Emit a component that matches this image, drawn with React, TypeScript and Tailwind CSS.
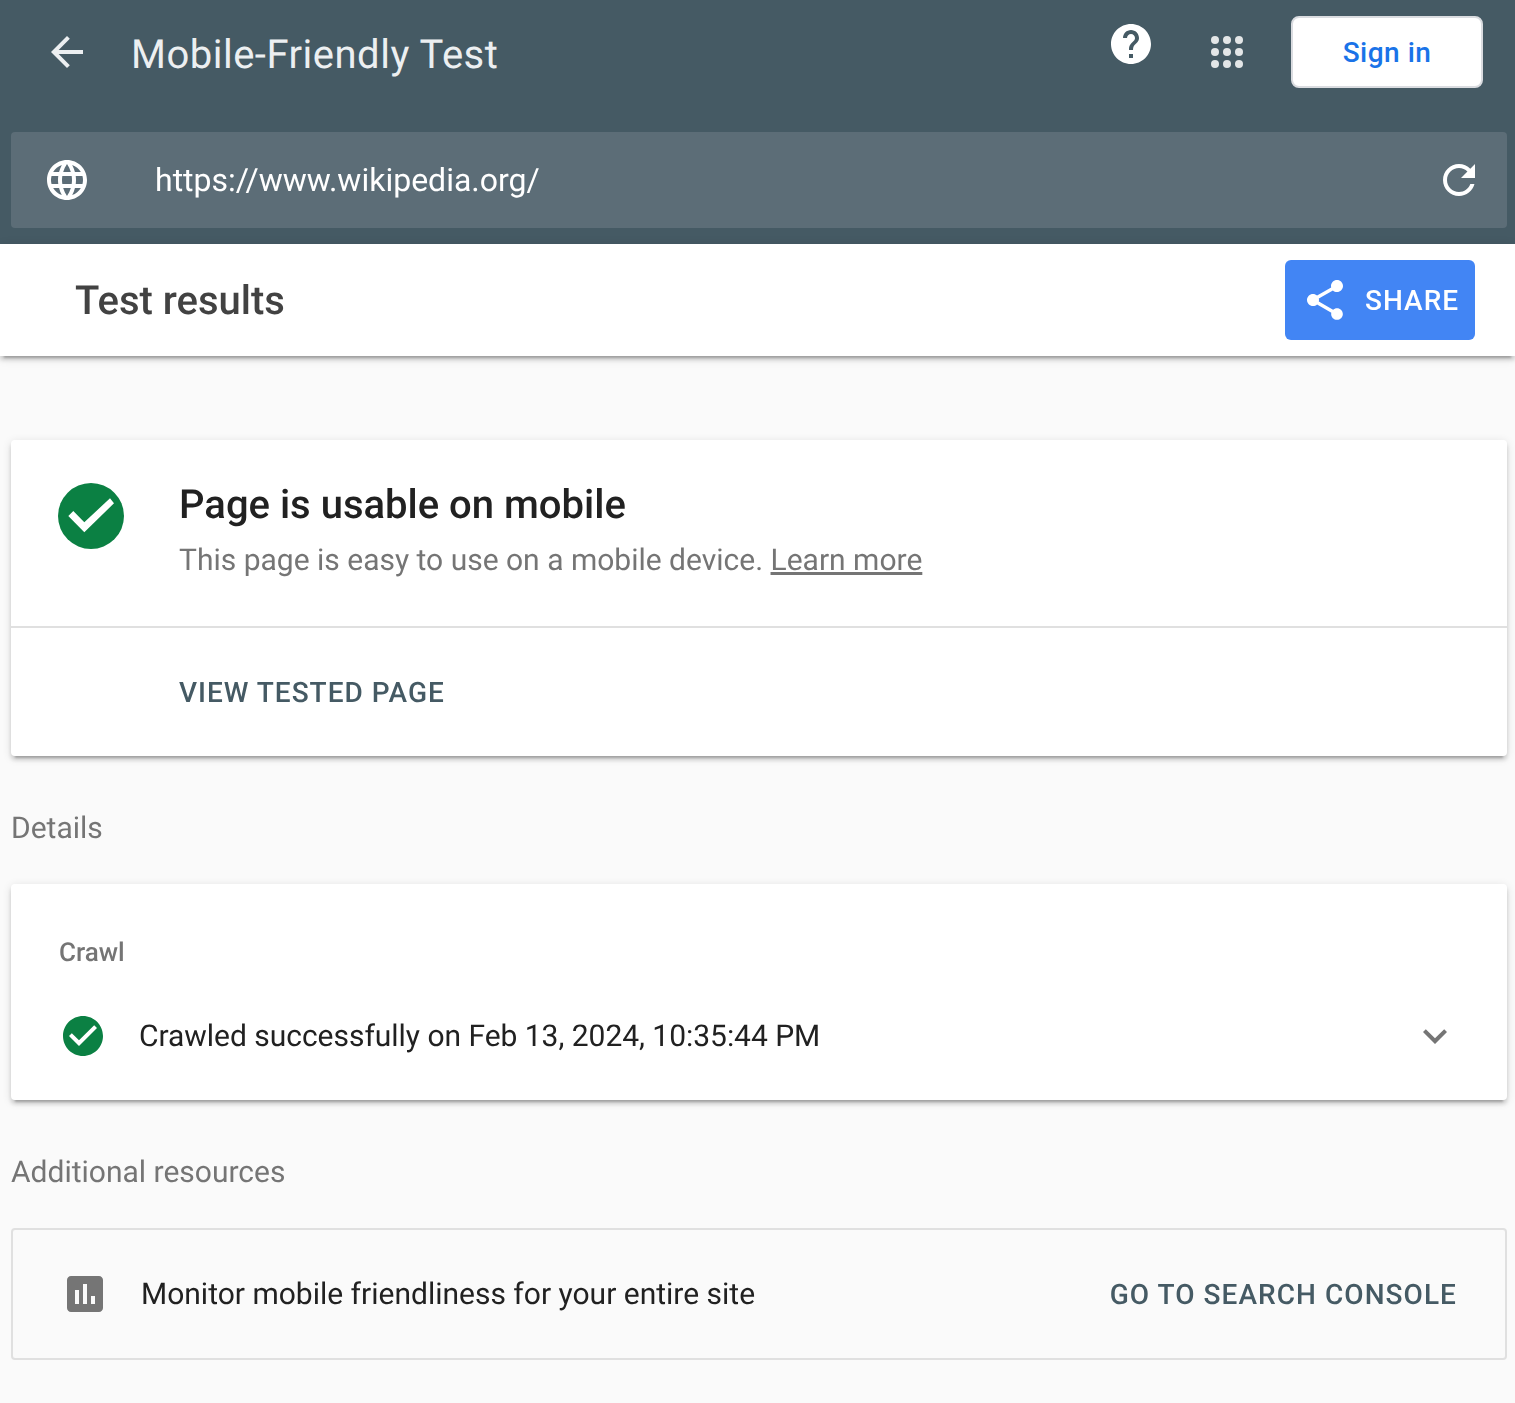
import type { ReactNode } from "react";

const roboto = "font-['Roboto',sans-serif] [text-rendering:geometricPrecision]";
const cardShadow = "shadow-[0_4px_4px_rgba(0,0,0,0.14),0_6px_2px_-4px_rgba(0,0,0,0.2),0_2px_10px_rgba(0,0,0,0.12)]";

function Icon({ d, className }: { d: string; className?: string }) {
  return (
    <svg viewBox="0 0 24 24" fill="currentColor" aria-hidden className={`h-12 w-12 shrink-0 ${className ?? ""}`}>
      <path d={d} />
    </svg>
  );
}

const paths = {
  back: "M20 11H7.83l5.59-5.59L12 4l-8 8 8 8 1.41-1.41L7.83 13H20v-2z",
  help: "M12 2C6.48 2 2 6.48 2 12s4.48 10 10 10 10-4.48 10-10S17.52 2 12 2zm1 17h-2v-2h2v2zm2.07-7.75l-.9.92C13.45 12.9 13 13.5 13 15h-2v-.5c0-1.1.45-2.1 1.17-2.83l1.24-1.26c.37-.36.59-.86.59-1.41 0-1.1-.9-2-2-2s-2 .9-2 2H8c0-2.21 1.79-4 4-4s4 1.79 4 4c0 .88-.36 1.68-.93 2.25z",
  globe: "M11.99 2C6.47 2 2 6.48 2 12s4.47 10 9.99 10C17.52 22 22 17.52 22 12S17.52 2 11.99 2zm6.93 6h-2.95c-.32-1.25-.78-2.45-1.38-3.56 1.84.63 3.37 1.91 4.33 3.56zM12 4.04c.83 1.2 1.48 2.53 1.91 3.96h-3.82c.43-1.43 1.08-2.76 1.91-3.96zM4.26 14C4.1 13.36 4 12.69 4 12s.1-1.36.26-2h3.38c-.08.66-.14 1.32-.14 2 0 .68.06 1.34.14 2H4.26zm.82 2h2.95c.32 1.25.78 2.45 1.38 3.56-1.84-.63-3.37-1.9-4.33-3.56zm2.95-8H5.08c.96-1.66 2.49-2.93 4.33-3.56C8.81 5.55 8.35 6.75 8.03 8zM12 19.96c-.83-1.2-1.48-2.53-1.91-3.96h3.82c-.43 1.43-1.08 2.76-1.91 3.96zM14.34 14H9.66c-.09-.66-.16-1.32-.16-2 0-.68.07-1.35.16-2h4.68c.09.65.16 1.32.16 2 0 .68-.07 1.34-.16 2zm.25 5.56c.6-1.11 1.06-2.31 1.38-3.56h2.95c-.96 1.65-2.49 2.93-4.33 3.56zM16.36 14c.08-.66.14-1.32.14-2 0-.68-.06-1.34-.14-2h3.38c.16.64.26 1.31.26 2s-.1 1.36-.26 2h-3.38z",
  refresh: "M17.65 6.35C16.2 4.9 14.21 4 12 4c-4.42 0-7.99 3.58-7.99 8s3.57 8 7.99 8c3.73 0 6.84-2.55 7.73-6h-2.08c-.82 2.33-3.04 4-5.65 4-3.31 0-6-2.69-6-6s2.69-6 6-6c1.66 0 3.14.69 4.22 1.78L13 11h7V4l-2.35 2.35z",
  share: "M18 16.08c-.76 0-1.44.3-1.96.77L8.91 12.7c.05-.23.09-.46.09-.7s-.04-.47-.09-.7l7.05-4.11c.54.5 1.25.81 2.04.81 1.66 0 3-1.34 3-3s-1.34-3-3-3-3 1.34-3 3c0 .24.04.47.09.7L8.04 9.81C7.5 9.31 6.79 9 6 9c-1.66 0-3 1.34-3 3s1.34 3 3 3c.79 0 1.5-.31 2.04-.81l7.12 4.16c-.05.21-.08.43-.08.65 0 1.61 1.31 2.92 2.92 2.92 1.61 0 2.92-1.31 2.92-2.92s-1.31-2.92-2.92-2.92z",
  checkCircle: "M12 2C6.48 2 2 6.48 2 12s4.48 10 10 10 10-4.48 10-10S17.52 2 12 2zm-2 15l-5-5 1.41-1.41L10 14.17l7.59-7.59L19 8l-9 9z",
  expand: "M16.59 8.59L12 13.17 7.41 8.59 6 10l6 6 6-6z",
  chart: "M19 3H5c-1.1 0-2 .9-2 2v14c0 1.1.9 2 2 2h14c1.1 0 2-.9 2-2V5c0-1.1-.9-2-2-2zM9 17H7v-7h2v7zm4 0h-2V7h2v10zm4 0h-2v-4h2v4z"
};

function AppsGrid() {
  return (
    <svg viewBox="0 0 48 48" fill="#e3e6e7" aria-hidden className="h-12 w-12 shrink-0">
      {[12, 24, 36].map((cy) =>
        [12, 24, 36].map((cx) => <circle key={`${cx}-${cy}`} cx={cx} cy={cy} r="4" />)
      )}
    </svg>
  );
}

function BigCheck() {
  return (
    <svg viewBox="0 0 66 66" aria-hidden className="h-[66px] w-[66px] shrink-0">
      <circle cx="33" cy="33" r="33" fill="#0b8043" />
      <polygon points="10.3,33 15.3,28 26.3,39.3 52,15.3 56,20.3 26.3,49.3" fill="#fff" />
    </svg>
  );
}

function SectionLabel({ children, className }: { children: ReactNode; className: string }) {
  return <h2 className={`pl-[11px] text-[30px] leading-9 text-[#757575] ${className}`}>{children}</h2>;
}

export default function App() {
  return (
    <div className={`${roboto} min-h-[1403px] bg-[#fafafa]`}>
      <header className="h-[244px] bg-[#455a64]">
        <div className="flex h-[132px] items-start">
          <Icon d={paths.back} className="ml-[43px] mt-7 text-[#eceff1]" />
          <h1 className="ml-[40px] mt-[27px] text-[40px] leading-[56px] tracking-[0.5px] text-[#eceff1]">Mobile-Friendly Test</h1>
          <div className="ml-auto flex pr-8 pt-4">
            <Icon d={paths.help} className="mt-1 text-white" />
            <div className="ml-[48px] mt-3">
              <AppsGrid />
            </div>
            <button
              type="button"
              className="ml-[40px] h-[72px] w-[192px] rounded-lg border-2 border-[#dadce0] bg-white pt-0.5 text-[28px] font-medium tracking-[0.5px] text-[#1a73e8]"
            >
              Sign in
            </button>
          </div>
        </div>
        <div className="ml-[11px] flex h-24 w-[1496px] items-center rounded bg-[#5c6d77] pl-8 pr-6">
          <Icon d={paths.globe} className="text-white" />
          <span className="ml-[64px] text-[32px] text-white [will-change:transform]">https://www.wikipedia.org/</span>
          <Icon d={paths.refresh} className="ml-auto text-white" />
        </div>
      </header>

      <div className={`relative flex h-28 items-center justify-between bg-white pl-[75px] pr-10 ${cardShadow}`}>
        <h2 className="pt-0.5 text-[40px] font-medium text-[#424242] [will-change:transform]">Test results</h2>
        <button
          type="button"
          className="flex h-20 w-[190px] items-center rounded-md bg-[#4285f4] pl-4 text-[28px] font-medium tracking-[1px] text-white"
        >
          <Icon d={paths.share} />
          <span className="ml-4 pt-0.5 [will-change:transform]">SHARE</span>
        </button>
      </div>

      <main className="pr-2 [will-change:transform]">
        <section className={`ml-[11px] mt-[84px] h-[316px] rounded bg-white ${cardShadow}`}>
          <div className="flex h-[188px] border-b-2 border-[#e0e0e0] pl-[47px] pt-[43px]">
            <BigCheck />
            <div className="-mt-[3px] ml-[55px]">
              <p className="text-[40px] font-medium leading-[50px] text-[#212121]">Page is usable on mobile</p>
              <p className="mt-[6px] text-[30px] leading-[50px] text-[#757575]">
                This page is easy to use on a mobile device. <span className="underline">Learn more</span>
              </p>
            </div>
          </div>
          <div className="flex h-[128px] items-center pl-[168px] pt-0.5 text-[28px] font-medium tracking-[1px] text-[#455a64]">VIEW TESTED PAGE</div>
        </section>

        <SectionLabel className="mt-[55px]">Details</SectionLabel>

        <section className={`ml-[11px] mt-[37px] h-[216px] rounded bg-white pl-[48px] pr-[48px] pt-[53px] ${cardShadow}`}>
          <h3 className="text-[26px] font-medium leading-8 text-[#757575]">Crawl</h3>
          <div className="mt-[43px] flex items-center">
            <Icon d={paths.checkCircle} className="text-[#0b8043]" />
            <span className="ml-8 text-[30px] tracking-[-0.03px] text-[#212121]">Crawled successfully on Feb 13, 2024, 10:35:44 PM</span>
            <Icon d={paths.expand} className="ml-auto text-[#757575]" />
          </div>
        </section>

        <SectionLabel className="mt-[55px]">Additional resources</SectionLabel>

        <section className="ml-[11px] mt-[37px] flex h-[132px] items-center rounded border-2 border-[#e0e0e0] pl-[48px] pr-[48px]">
          <Icon d={paths.chart} className="text-[#757575]" />
          <span className="ml-8 text-[30px] text-[#212121]">Monitor mobile friendliness for your entire site</span>
          <span className="ml-auto pt-0.5 text-[28px] font-medium tracking-[1.05px] text-[#455a64]">GO TO SEARCH CONSOLE</span>
        </section>
      </main>
    </div>
  );
}
